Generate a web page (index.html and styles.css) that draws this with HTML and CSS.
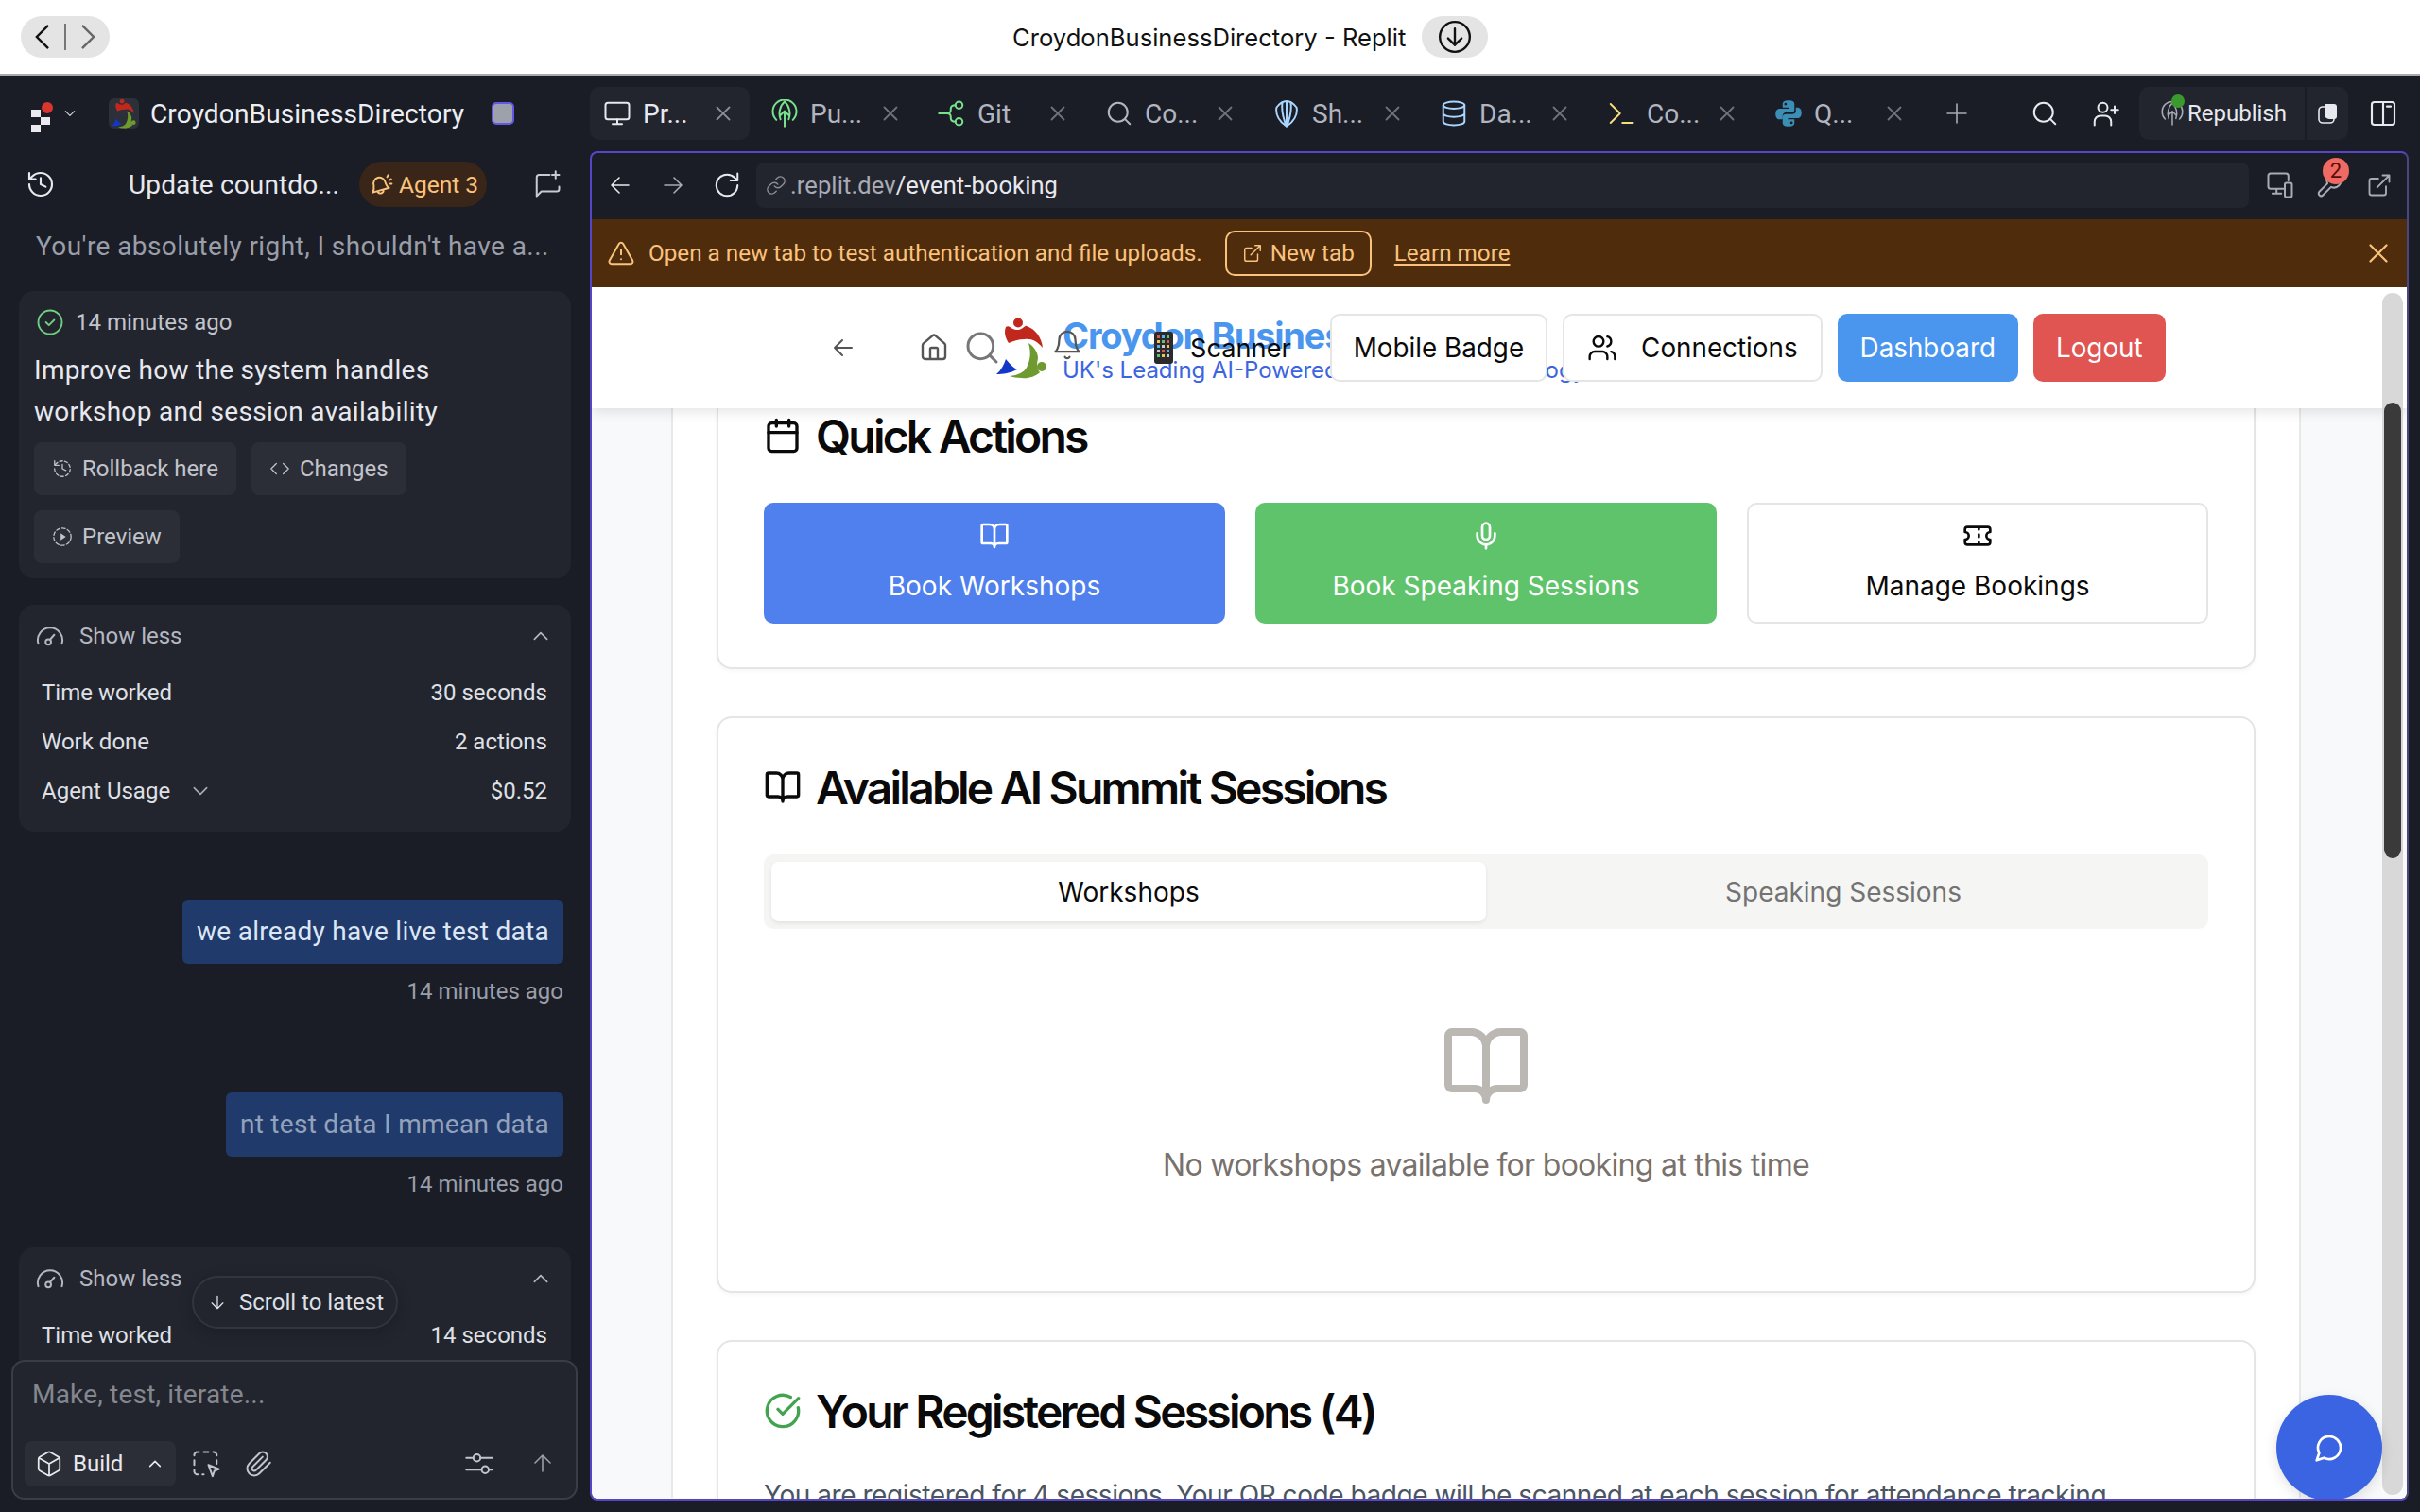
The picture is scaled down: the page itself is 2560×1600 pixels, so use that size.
FILE: index.html
```html
<!DOCTYPE html>
<html lang="en">
<head>
    <meta charset="utf-8" />
    <title>CroydonBusinessDirectory - Replit</title>
    <link rel="stylesheet" href="styles.css">
</head>
<body>
    <svg class="sprite" xmlns="http://www.w3.org/2000/svg">
        <defs>
            <symbol id="i-monitor" viewBox="0 0 24 24"><rect x="2" y="3" width="20" height="14" rx="2"/><path d="M8 21h8M12 17v4"/></symbol>
            <symbol id="i-x" viewBox="0 0 24 24"><path d="M18 6 6 18M6 6l12 12"/></symbol>
            <symbol id="i-publish" viewBox="0 0 24 24"><path d="M5 17.500a10 10 0 1 1 14 0M8.500 17C6.500 12 8 5.500 12 2c4 3.500 5.500 10 3.500 15M12 23V10M8 14l4-4 4 4"/></symbol>
            <symbol id="i-git" viewBox="0 0 24 24"><circle cx="18" cy="5" r="3"/><circle cx="18" cy="19" r="3"/><path d="M1 12h7c2.500 0 3-1.500 3-3V8c0-1.500 1-3 4-3M8 12c2.500 0 3 1.500 3 3v1c0 1.500 1 3 4 3"/></symbol>
            <symbol id="i-search" viewBox="0 0 24 24"><circle cx="11" cy="11" r="8"/><path d="m21 21-4.300-4.300"/></symbol>
            <symbol id="i-shell" viewBox="0 0 24 24"><path d="M12 23C6 19 2.500 13 3.500 7 6 3.500 9 1.500 12 1.500S18 3.500 20.500 7C21.500 13 18 19 12 23ZM12 23C9 16 7.500 9 8.500 2.500M12 23c3-7 4.500-14 3.500-20.500M12 23V1.500"/></symbol>
            <symbol id="i-db" viewBox="0 0 24 24"><ellipse cx="12" cy="5" rx="9" ry="3"/><path d="M3 5v14a9 3 0 0 0 18 0V5M3 12a9 3 0 0 0 18 0"/></symbol>
            <symbol id="i-plus" viewBox="0 0 24 24"><path d="M12 2v20M2 12h20"/></symbol>
            <symbol id="i-user-plus" viewBox="0 0 24 24"><circle cx="10" cy="7" r="4"/><path d="M3 22v-3a5 5 0 0 1 5-5h4a5 5 0 0 1 5 5v3M20 6v6M17 9h6"/></symbol>
            <symbol id="i-panel" viewBox="0 0 24 24"><rect x="3" y="3" width="18" height="18" rx="2"/><path d="M12 3v18M15 6.500h3"/></symbol>
            <symbol id="i-history" viewBox="0 0 24 24"><path d="M3 12a9 9 0 1 0 9-9 9.750 9.750 0 0 0-6.740 2.740L3 8M3 3v5h5M12 7v5l4 2"/></symbol>
            <symbol id="i-bell-ring" viewBox="0 0 24 24"><path d="M9 5.500a6 6 0 0 1 7 4c1.500 5 4 6 4 6L4 20s1.500-2.500 1-7a6 6 0 0 1 4-7.500ZM9 19.500a3 3 0 0 0 5.500-1.500M19 3l-1 2M22 7l-2 1M22.500 11.500h-1.500"/></symbol>
            <symbol id="i-chat-plus" viewBox="0 0 24 24"><path d="M22 14v2a2 2 0 0 1-2 2H7l-4 4V6a2 2 0 0 1 2-2h9M19 1v6M16 4h6"/></symbol>
            <symbol id="i-check-circle" viewBox="0 0 24 24"><circle cx="12" cy="12" r="10"/><path d="m8.500 12 2.500 2.500 4.500-4.500"/></symbol>
            <symbol id="i-rollback" viewBox="0 0 24 24"><path stroke-dasharray="3.500 2.500" d="M3 12a9 9 0 1 0 9-9 9.750 9.750 0 0 0-6.740 2.740L3 8"/><path d="M3 3v5h5M12 7v5l4 2"/></symbol>
            <symbol id="i-code" viewBox="0 0 24 24"><path d="m8 6-6 6 6 6M16 6l6 6-6 6"/></symbol>
            <symbol id="i-preview" viewBox="0 0 24 24"><circle stroke-dasharray="4 2.600" cx="12" cy="12" r="10"/><path class="solid" d="m10 8 6 4-6 4Z"/></symbol>
            <symbol id="i-gauge" viewBox="0 0 24 24"><path d="M2 18.500A10.500 10.500 0 0 1 12 5a10.500 10.500 0 0 1 10 13.500"/><circle cx="10.500" cy="17" r="2.300"/><path d="m12 15 3.500-4"/></symbol>
            <symbol id="i-up" viewBox="0 0 24 24"><path d="m4 16 8-8 8 8"/></symbol>
            <symbol id="i-down" viewBox="0 0 24 24"><path d="m4 8 8 8 8-8"/></symbol>
            <symbol id="i-arrow-down" viewBox="0 0 24 24"><path d="M12 4v16M5 13l7 7 7-7"/></symbol>
            <symbol id="i-arrow-up" viewBox="0 0 24 24"><path d="M12 20V3M4 11l8-8 8 8"/></symbol>
            <symbol id="i-arrow-left" viewBox="0 0 24 24"><path d="M21 12H3M11 4l-8 8 8 8"/></symbol>
            <symbol id="i-arrow-right" viewBox="0 0 24 24"><path d="M3 12h18M13 4l8 8-8 8"/></symbol>
            <symbol id="i-box" viewBox="0 0 24 24"><path d="M21 8a2 2 0 0 0-1-1.730l-7-4a2 2 0 0 0-2 0l-7 4A2 2 0 0 0 3 8v8a2 2 0 0 0 1 1.730l7 4a2 2 0 0 0 2 0l7-4A2 2 0 0 0 21 16ZM3.300 7l8.700 5 8.700-5M12 22V12"/></symbol>
            <symbol id="i-select" viewBox="0 0 24 24"><path d="M5 2h1M10 2h4M18 2h1a3 3 0 0 1 2 2v1M21 9v3M2 5V4a3 3 0 0 1 2-2M2 9v4M2 17v2a3 3 0 0 0 2 2h1M9 21h1"/><path d="m14 13 9 3.500-4 1.500-1.500 4.500Z"/></symbol>
            <symbol id="i-clip" viewBox="0 0 24 24"><path d="m21.440 11.050-9.190 9.190a6 6 0 0 1-8.490-8.490l8.570-8.570A4 4 0 1 1 18 8.840l-8.590 8.570a2 2 0 0 1-2.830-2.830l8.490-8.480"/></symbol>
            <symbol id="i-sliders" viewBox="0 0 24 24"><path d="M1 7h6M13 7h10M1 17h13M20 17h3"/><circle cx="10" cy="7" r="3"/><circle cx="17" cy="17" r="3"/></symbol>
            <symbol id="i-reload" viewBox="0 0 24 24"><path d="M21 12a9 9 0 1 1-9-9c2.520 0 4.930 1 6.740 2.740L21 8M21 2v6h-6"/></symbol>
            <symbol id="i-link" viewBox="0 0 24 24"><path d="M10 13a5 5 0 0 0 7.540.54l3-3a5 5 0 0 0-7.070-7.070l-1.720 1.710M14 11a5 5 0 0 0-7.540-.54l-3 3a5 5 0 0 0 7.070 7.070l1.710-1.710"/></symbol>
            <symbol id="i-devices" viewBox="0 0 24 24"><path d="M15 15H4a2 2 0 0 1-2-2V4a2 2 0 0 1 2-2h13a2 2 0 0 1 2 2v4M9 15v4M5.500 19H13"/><rect x="16" y="10" width="6" height="12" rx="1.500"/></symbol>
            <symbol id="i-wrench" viewBox="0 0 24 24"><path d="M14.700 6.300a1 1 0 0 0 0 1.400l1.600 1.600a1 1 0 0 0 1.400 0l3.770-3.770a6 6 0 0 1-7.940 7.940l-6.910 6.910a2.120 2.120 0 0 1-3-3l6.910-6.910a6 6 0 0 1 7.940-7.940l-3.760 3.760z"/></symbol>
            <symbol id="i-external" viewBox="0 0 24 24"><path d="M18 13v6a2 2 0 0 1-2 2H5a2 2 0 0 1-2-2V8a2 2 0 0 1 2-2h6M15 3h6v6M10 14 21 3"/></symbol>
            <symbol id="i-alert" viewBox="0 0 24 24"><path d="m21.730 18-8-14a2 2 0 0 0-3.480 0l-8 14A2 2 0 0 0 4 21h16a2 2 0 0 0 1.730-3ZM12 9v4M12 17h.01"/></symbol>
            <symbol id="i-home" viewBox="0 0 24 24"><path d="M15 21v-8a1 1 0 0 0-1-1h-4a1 1 0 0 0-1 1v8M3 10a2 2 0 0 1 .709-1.528l7-5.999a2 2 0 0 1 2.582 0l7 5.999A2 2 0 0 1 21 10v9a2 2 0 0 1-2 2H5a2 2 0 0 1-2-2z"/></symbol>
            <symbol id="i-bell" viewBox="0 0 24 24"><path d="M6 8a6 6 0 0 1 12 0c0 7 3 9 3 9H3s3-2 3-9M10.300 21a1.940 1.940 0 0 0 3.400 0"/></symbol>
            <symbol id="i-users" viewBox="0 0 24 24"><path d="M16 21v-2a4 4 0 0 0-4-4H6a4 4 0 0 0-4 4v2M22 21v-2a4 4 0 0 0-3-3.870M16 3.130a4 4 0 0 1 0 7.750"/><circle cx="9" cy="7" r="4"/></symbol>
            <symbol id="i-calendar" viewBox="0 0 24 24"><path d="M8 2v4M16 2v4M3 10h18"/><rect x="3" y="4" width="18" height="18" rx="2"/></symbol>
            <symbol id="i-book" viewBox="0 0 24 24"><path d="M12 7v14M3 18a1 1 0 0 1-1-1V4a1 1 0 0 1 1-1h5a4 4 0 0 1 4 4 4 4 0 0 1 4-4h5a1 1 0 0 1 1 1v13a1 1 0 0 1-1 1h-6a3 3 0 0 0-3 3 3 3 0 0 0-3-3z"/></symbol>
            <symbol id="i-mic" viewBox="0 0 24 24"><path d="M12 2a3 3 0 0 0-3 3v7a3 3 0 0 0 6 0V5a3 3 0 0 0-3-3ZM19 10v2a7 7 0 0 1-14 0v-2M12 19v3"/></symbol>
            <symbol id="i-ticket" viewBox="0 0 24 24"><path d="M2 9a3 3 0 0 1 0 6v2a2 2 0 0 0 2 2h16a2 2 0 0 0 2-2v-2a3 3 0 0 1 0-6V7a2 2 0 0 0-2-2H4a2 2 0 0 0-2 2ZM13 5v2M13 17v2M13 11v2"/></symbol>
            <symbol id="i-check-big" viewBox="0 0 24 24"><path d="M21.800 10A10 10 0 1 1 17 3.335M9 11l3 3L22 4"/></symbol>
            <symbol id="i-message" viewBox="0 0 24 24"><path d="M7.900 20A9 9 0 1 0 4 16.100L2 22Z"/></symbol>
            <symbol id="logo-croydon" viewBox="0 0 60 66">
                <circle cx="26" cy="6.500" r="5" fill="#c0281e"/>
                <path fill="#c0281e" d="M13 11C17 8 18 14 26 14 31 14 33 9 35 10 44 13 51 22 52 33 46 26 40 23 33 24 26 24 21 26 16 28 12 22 11 16 13 11Z"/>
                <circle cx="51" cy="53" r="5" fill="#6f9a2f"/>
                <path fill="#6f9a2f" d="M37 28C43 32 47 38 47 44 46 49 45 54 49 59 44 64 35 66 30 65 25 65 20 64 17 63 26 62 32 59 35 54 39 46 40 38 37 28Z"/>
                <path fill="#1338c8" d="M13 45C17 50 21 54 25 56 18 60 10 61 3 61 8 57 11 51 13 45Z"/>
            </symbol>
        </defs>
    </svg>

    <header class="titlebar">
        <div class="history-pill">
            <svg class="pill-chev" viewBox="0 0 18 30"><path d="M16 2 3 15l13 13"/></svg>
            <span class="pill-sep"></span>
            <svg class="pill-chev pill-chev-off" viewBox="0 0 18 30"><path d="m2 2 13 13L2 28"/></svg>
        </div>
        <div class="title-group">
            <span class="title-text">CroydonBusinessDirectory - Replit</span>
            <span class="download-pill">
                <svg class="ic" viewBox="0 0 24 24"><circle cx="12" cy="12" r="10"/><path d="M12 6.500v11M7.500 13l4.500 4.500 4.500-4.500"/></svg>
            </span>
        </div>
    </header>

    <div class="workspace">
        <div class="topbar">
            <div class="project">
                <span class="replit-logo">
                    <i class="sq sq-a"></i><i class="sq sq-b"></i><i class="sq sq-c"></i><i class="red-dot"></i>
                </span>
                <svg class="ic project-chev"><use href="#i-down"/></svg>
                <span class="app-icon"><svg><use href="#logo-croydon"/></svg></span>
                <span class="project-name">CroydonBusinessDirectory</span>
                <span class="stop-btn"></span>
            </div>
            <div class="tabs">
                <div class="tab active"><svg class="ic"><use href="#i-monitor"/></svg><span>Pr...</span><svg class="ic tab-x"><use href="#i-x"/></svg></div>
                <div class="tab"><svg class="ic green"><use href="#i-publish"/></svg><span>Pu...</span><svg class="ic tab-x"><use href="#i-x"/></svg></div>
                <div class="tab"><svg class="ic green"><use href="#i-git"/></svg><span>Git</span><svg class="ic tab-x"><use href="#i-x"/></svg></div>
                <div class="tab"><svg class="ic"><use href="#i-search"/></svg><span>Co...</span><svg class="ic tab-x"><use href="#i-x"/></svg></div>
                <div class="tab"><svg class="ic skyblue"><use href="#i-shell"/></svg><span>Sh...</span><svg class="ic tab-x"><use href="#i-x"/></svg></div>
                <div class="tab"><svg class="ic skyblue"><use href="#i-db"/></svg><span>Da...</span><svg class="ic tab-x"><use href="#i-x"/></svg></div>
                <div class="tab">
                    <svg class="ic" viewBox="0 0 24 24"><path class="yellow" d="m3 4 8 8-8 8"/><path class="yellow" d="M13 20h9"/></svg>
                    <span>Co...</span><svg class="ic tab-x"><use href="#i-x"/></svg>
                </div>
                <div class="tab">
                    <svg class="py" viewBox="0 0 24 24">
                        <path d="M12 1C8.500 1 7 2.200 7 4v3h5.500v1H4.500C2.300 8 1 9.800 1 12.500S2.300 17 4.500 17H7v-3c0-1.800 1.600-3 3.500-3h4c1.700 0 2.500-1 2.500-2.500V4c0-1.800-1.500-3-5-3Zm-2.500 2a1.100 1.100 0 1 1 0 2.200 1.100 1.100 0 0 1 0-2.200Z"/>
                        <path d="M12 23c3.500 0 5-1.200 5-3v-3h-5.500v-1h8c2.200 0 3.500-1.800 3.500-4.500S21.700 7 19.500 7H18.200v3c0 1.800-1.200 2.500-3.200 2.500h-5c-1.700 0-3 .8-3 2.500v5c0 1.800 1.500 3 5 3Zm2.500-2a1.100 1.100 0 1 1 0-2.200 1.100 1.100 0 0 1 0 2.200Z"/>
                    </svg>
                    <span>Q...</span><svg class="ic tab-x"><use href="#i-x"/></svg>
                </div>
            </div>
            <svg class="ic top-plus"><use href="#i-plus"/></svg>
            <svg class="ic top-search"><use href="#i-search"/></svg>
            <svg class="ic top-invite"><use href="#i-user-plus"/></svg>
            <div class="republish">
                <span class="republish-main">
                    <span class="republish-icon"><svg class="ic"><use href="#i-publish"/></svg><i class="live-dot"></i></span>
                    Republish
                </span>
                <span class="republish-side">
                    <svg viewBox="0 0 24 24"><rect class="outline" x="3" y="5" width="16" height="17" rx="4"/><path class="fill" d="M9 2h10a3 3 0 0 1 3 3v10a3 3 0 0 1-3 3h-5a5 5 0 0 1-5-5Z"/></svg>
                </span>
            </div>
            <svg class="ic top-panel"><use href="#i-panel"/></svg>
        </div>

        <div class="panes">
            <aside class="agent">
                <div class="agent-head">
                    <svg class="ic head-history"><use href="#i-history"/></svg>
                    <span class="agent-title">Update countdo...</span>
                    <span class="agent-pill"><svg class="ic"><use href="#i-bell-ring"/></svg>Agent 3</span>
                    <svg class="ic head-new"><use href="#i-chat-plus"/></svg>
                </div>
                <div class="agent-sub">You're absolutely right, I shouldn't have a...</div>

                <div class="feed">
                    <section class="card checkpoint">
                        <div class="when"><svg class="ic ok"><use href="#i-check-circle"/></svg>14 minutes ago</div>
                        <p class="summary">Improve how the system handles workshop and session availability</p>
                        <div class="actions">
                            <span class="action"><svg class="ic"><use href="#i-rollback"/></svg>Rollback here</span>
                            <span class="action"><svg class="ic"><use href="#i-code"/></svg>Changes</span>
                            <span class="action"><svg class="ic"><use href="#i-preview"/></svg>Preview</span>
                        </div>
                    </section>

                    <section class="card stats">
                        <div class="stats-head">
                            <svg class="ic gauge"><use href="#i-gauge"/></svg>Show less
                            <svg class="ic stats-chev"><use href="#i-up"/></svg>
                        </div>
                        <div class="stat"><span>Time worked</span><span>30 seconds</span></div>
                        <div class="stat"><span>Work done</span><span>2 actions</span></div>
                        <div class="stat"><span>Agent Usage<svg class="ic usage-chev"><use href="#i-down"/></svg></span><span>$0.52</span></div>
                    </section>

                    <div class="bubble">we already have live test data</div>
                    <div class="bubble-time">14 minutes ago</div>

                    <div class="bubble bubble-dim">nt test data I mmean data</div>
                    <div class="bubble-time">14 minutes ago</div>

                    <section class="card stats">
                        <div class="stats-head">
                            <svg class="ic gauge"><use href="#i-gauge"/></svg>Show less
                            <svg class="ic stats-chev"><use href="#i-up"/></svg>
                        </div>
                        <div class="stat"><span>Time worked</span><span>14 seconds</span></div>
                    </section>

                    <div class="scroll-latest"><svg class="ic"><use href="#i-arrow-down"/></svg>Scroll to latest</div>
                </div>

                <div class="composer">
                    <div class="composer-input">Make, test, iterate...</div>
                    <div class="composer-tools">
                        <span class="build-btn"><svg class="ic"><use href="#i-box"/></svg>Build<svg class="ic build-chev"><use href="#i-up"/></svg></span>
                        <svg class="ic tool-select"><use href="#i-select"/></svg>
                        <svg class="ic tool-clip"><use href="#i-clip"/></svg>
                        <svg class="ic tool-sliders"><use href="#i-sliders"/></svg>
                        <svg class="ic tool-send"><use href="#i-arrow-up"/></svg>
                    </div>
                </div>
            </aside>

            <main class="preview">
                <div class="toolbar">
                    <svg class="ic tb-back"><use href="#i-arrow-left"/></svg>
                    <svg class="ic tb-forward"><use href="#i-arrow-right"/></svg>
                    <svg class="ic tb-reload"><use href="#i-reload"/></svg>
                    <div class="urlbar"><svg class="ic"><use href="#i-link"/></svg><span class="url-host">.replit.dev</span><span class="url-path">/event-booking</span></div>
                    <svg class="ic tb-devices"><use href="#i-devices"/></svg>
                    <span class="tb-tools"><svg class="ic"><use href="#i-wrench"/></svg><b class="badge">2</b></span>
                    <svg class="ic tb-open"><use href="#i-external"/></svg>
                </div>

                <div class="notice">
                    <svg class="ic notice-alert"><use href="#i-alert"/></svg>
                    <span>Open a new tab to test authentication and file uploads.</span>
                    <span class="notice-btn"><svg class="ic"><use href="#i-external"/></svg>New tab</span>
                    <span class="notice-link">Learn more</span>
                    <svg class="ic notice-x"><use href="#i-x"/></svg>
                </div>

                <div class="page">
                    <nav class="site-nav">
                        <div class="brand-text">
                            <div class="brand-name">Croydon Business Directory</div>
                            <div class="brand-sub">UK's Leading AI-Powered Business&nbsp;&nbsp; Technology</div>
                        </div>
                        <svg class="ic nav-back"><use href="#i-arrow-left"/></svg>
                        <svg class="ic nav-home"><use href="#i-home"/></svg>
                        <svg class="ic nav-search"><use href="#i-search"/></svg>
                        <svg class="nav-logo"><use href="#logo-croydon"/></svg>
                        <svg class="ic nav-bell"><use href="#i-bell"/></svg>
                        <span class="nav-scanner">
                            <svg class="phone" viewBox="0 0 20 34">
                                <rect width="20" height="34" rx="3" fill="#2b2b2e"/>
                                <g fill="#e0564a"><rect x="3" y="4" width="3" height="3"/><rect x="13" y="9" width="3" height="3"/><rect x="8" y="19" width="3" height="3"/></g>
                                <g fill="#57b4e8"><rect x="8" y="4" width="3" height="3"/><rect x="3" y="14" width="3" height="3"/><rect x="13" y="19" width="3" height="3"/></g>
                                <g fill="#62c46a"><rect x="13" y="4" width="3" height="3"/><rect x="8" y="9" width="3" height="3"/><rect x="3" y="24" width="3" height="3"/></g>
                                <g fill="#f1c24d"><rect x="3" y="9" width="3" height="3"/><rect x="13" y="14" width="3" height="3"/><rect x="8" y="24" width="3" height="3"/></g>
                                <g fill="#c9c9d2"><rect x="8" y="14" width="3" height="3"/><rect x="3" y="19" width="3" height="3"/><rect x="13" y="24" width="3" height="3"/></g>
                            </svg>
                            Scanner
                        </span>
                        <span class="nav-btn nav-badge">Mobile Badge</span>
                        <span class="nav-btn"><svg class="ic"><use href="#i-users"/></svg>Connections</span>
                        <span class="nav-btn nav-dash">Dashboard</span>
                        <span class="nav-btn nav-logout">Logout</span>
                    </nav>

                    <div class="scroller">
                        <div class="column">
                            <section class="panel panel-cut">
                                <h2><svg class="ic"><use href="#i-calendar"/></svg>Quick Actions</h2>
                                <div class="quick-grid">
                                    <a class="quick quick-blue"><svg class="ic"><use href="#i-book"/></svg>Book Workshops</a>
                                    <a class="quick quick-green"><svg class="ic"><use href="#i-mic"/></svg>Book Speaking Sessions</a>
                                    <a class="quick quick-plain"><svg class="ic"><use href="#i-ticket"/></svg>Manage Bookings</a>
                                </div>
                            </section>

                            <section class="panel">
                                <h2><svg class="ic"><use href="#i-book"/></svg>Available AI Summit Sessions</h2>
                                <div class="segment">
                                    <span class="segment-item on">Workshops</span>
                                    <span class="segment-item">Speaking Sessions</span>
                                </div>
                                <div class="empty">
                                    <svg class="ic"><use href="#i-book"/></svg>
                                    <p>No workshops available for booking at this time</p>
                                </div>
                            </section>

                            <section class="panel">
                                <h2><svg class="ic ok-green"><use href="#i-check-big"/></svg>Your Registered Sessions (4)</h2>
                                <p class="panel-note">You are registered for 4 sessions. Your QR code badge will be scanned at each session for attendance tracking.</p>
                            </section>
                        </div>
                    </div>

                    <div class="scrollbar"><div class="scrollbar-thumb"></div></div>
                    <div class="chat-fab"><svg class="ic"><use href="#i-message"/></svg></div>
                </div>
            </main>
        </div>
    </div>
</body>
</html>
```

FILE: styles.css
```css
* {
    box-sizing: border-box;
}
html,
body {
    margin: 0;
    padding: 0;
}
body {
    width: 2560px;
    height: 1600px;
    overflow: hidden;
    background: #1a1d26;
    color: #e8e9ee;
    font-family: Roboto, "Noto Sans", sans-serif;
    font-size: 24px;
}
.sprite {
    display: none;
}
.ic {
    display: block;
    flex: none;
    width: 32px;
    height: 32px;
    fill: none;
    stroke: currentColor;
    stroke-width: 1.6;
    stroke-linecap: round;
    stroke-linejoin: round;
}
.solid {
    fill: currentColor;
    stroke: none;
}

/* mac title bar */
.titlebar {
    display: flex;
    align-items: center;
    height: 80px;
    padding: 0 22px;
    background: #fff;
    border-bottom: 2px solid #a9a9a9;
    color: #111;
}
.history-pill {
    display: flex;
    align-items: center;
    justify-content: center;
    gap: 15px;
    width: 94px;
    height: 44px;
    border-radius: 22px;
    background: #e4e4e4;
}
.pill-chev {
    width: 17px;
    height: 28px;
    fill: none;
    stroke: #111;
    stroke-width: 2.6;
}
.pill-chev-off {
    stroke: #666;
}
.pill-sep {
    width: 2px;
    height: 28px;
    background: #777;
}
.title-group {
    display: flex;
    align-items: center;
    gap: 17px;
    margin-left: 955px;
}
.title-text {
    font-family: Inter, sans-serif;
    font-size: 25.6px;
    color: #111;
}
.download-pill {
    display: flex;
    align-items: center;
    justify-content: center;
    width: 70px;
    height: 44px;
    border-radius: 22px;
    background: #e4e4e4;
}
.download-pill .ic {
    width: 38px;
    height: 38px;
    stroke-width: 1.5;
}

/* replit top bar */
.workspace {
    height: 1520px;
}
.topbar {
    display: flex;
    align-items: center;
    height: 80px;
}
.project {
    display: flex;
    align-items: center;
    width: 624px;
    padding-left: 33px;
}
.replit-logo {
    position: relative;
    width: 23px;
    height: 32px;
    margin-top: 8px;
}
.sq {
    position: absolute;
    background: #e9e9ef;
}
.sq-a {
    left: 0;
    top: 8px;
    width: 10px;
    height: 8px;
}
.sq-b {
    left: 10px;
    top: 16px;
    width: 10px;
    height: 8px;
}
.sq-c {
    left: 0;
    top: 24px;
    width: 10px;
    height: 8px;
}
.red-dot {
    position: absolute;
    left: 11px;
    top: 0;
    width: 12px;
    height: 12px;
    border-radius: 50%;
    background: #d8362e;
}
.project-chev {
    width: 14px;
    height: 14px;
    margin-left: 11px;
    stroke-width: 2.2;
    color: #c8cad2;
}
.app-icon {
    display: flex;
    align-items: center;
    justify-content: center;
    width: 32px;
    height: 32px;
    margin-left: 34px;
    border-radius: 6px;
    background: #2c3038;
}
.app-icon svg {
    width: 30px;
    height: 32px;
}
.project-name {
    margin-left: 12px;
    font-size: 28px;
    letter-spacing: 0.15px;
    color: #eceef3;
}
.stop-btn {
    width: 24px;
    height: 24px;
    margin-left: 29px;
    border: 2px solid #6257e8;
    border-radius: 5px;
    background: #9da1ab;
}
.tabs {
    display: flex;
    gap: 8px;
}
.tab {
    display: flex;
    align-items: center;
    width: 169px;
    height: 56px;
    padding: 0 15px 0 14px;
    border-radius: 10px;
    color: #b2b5bf;
    font-size: 28px;
}
.tab span {
    flex: 1;
    margin-left: 12px;
}
.tab.active {
    background: #22252e;
    color: #e8e9ee;
}
.tab .ic {
    width: 30px;
    height: 30px;
}
.tab .tab-x {
    width: 26px;
    height: 26px;
    color: #6f727c;
    stroke-width: 1.7;
}
.tab.active .tab-x {
    color: #8a8d97;
}
.green {
    color: #79e08c;
}
.skyblue {
    color: #a9d5ff;
}
.yellow {
    stroke: #f5dc7d;
}
.py {
    flex: none;
    width: 30px;
    height: 30px;
    fill: #3b8fb4;
}
.top-plus {
    width: 24px;
    height: 24px;
    margin-left: 26px;
    color: #a8abb5;
}
.top-search {
    width: 30px;
    height: 30px;
    margin-left: 66px;
    color: #e8e9ee;
}
.top-invite {
    width: 30px;
    height: 30px;
    margin-left: 34px;
    color: #e8e9ee;
}
.republish {
    display: flex;
    align-items: stretch;
    width: 221px;
    height: 56px;
    margin-left: 21px;
    border-radius: 10px;
    background: #22252e;
}
.republish-main {
    display: flex;
    align-items: center;
    gap: 3px;
    width: 177px;
    padding-left: 22px;
    border-right: 2px solid #1a1d26;
    font-size: 24px;
    color: #e8e9ee;
}
.republish-icon {
    position: relative;
}
.republish-icon .ic {
    width: 26px;
    height: 28px;
    color: #a8abb5;
    stroke-width: 1.4;
}
.live-dot {
    position: absolute;
    right: 0;
    top: -6px;
    width: 14px;
    height: 14px;
    border-radius: 50%;
    background: #3a9a2e;
}
.republish-side {
    display: flex;
    align-items: center;
    justify-content: center;
    flex: 1;
}
.republish-side svg {
    width: 24px;
    height: 24px;
}
.republish-side .outline {
    fill: none;
    stroke: #e8e9ee;
    stroke-width: 1.6;
}
.republish-side .fill {
    fill: #e8e9ee;
}
.top-panel {
    width: 32px;
    height: 34px;
    margin-left: 21px;
    color: #e8e9ee;
}

.panes {
    display: flex;
    height: 1440px;
}

/* agent column */
.agent {
    display: flex;
    flex-direction: column;
    width: 624px;
    height: 1440px;
}
.agent-head {
    display: flex;
    align-items: center;
    height: 70px;
    padding-left: 27px;
}
.head-history {
    width: 32px;
    height: 32px;
}
.agent-title {
    width: 244px;
    margin-left: 77px;
    font-size: 28px;
    letter-spacing: 0.15px;
}
.agent-pill {
    display: flex;
    align-items: center;
    gap: 6px;
    width: 135px;
    height: 48px;
    padding-left: 10px;
    border-radius: 24px;
    background: #3a2618;
    color: #fbc47e;
    font-size: 24.5px;
}
.agent-pill .ic {
    width: 26px;
    height: 26px;
    stroke-width: 1.8;
}
.head-new {
    margin-left: 49px;
    color: #c9cbd3;
    width: 30px;
    height: 30px;
}
.agent-sub {
    height: 60px;
    margin-bottom: 18px;
    padding-left: 38px;
    font-size: 28px;
    letter-spacing: 0.42px;
    line-height: 61px;
    color: #9a9ea9;
}
.feed {
    position: relative;
    flex: 1;
    overflow: hidden;
    padding: 0 20px;
}
.card {
    width: 584px;
    border-radius: 16px;
    background: #22252e;
}
.checkpoint {
    padding: 16px;
}
.when {
    display: flex;
    align-items: center;
    gap: 12px;
    height: 34px;
    padding-left: 2px;
    color: #c2c4cc;
}
.ok {
    width: 30px;
    height: 30px;
    color: #6fd07f;
    stroke-width: 1.5;
}
.summary {
    max-width: 500px;
    margin: 12px 0 10px;
    font-size: 28px;
    letter-spacing: 0.3px;
    line-height: 44px;
}
.actions {
    display: flex;
    flex-wrap: wrap;
    gap: 16px;
}
.action {
    display: flex;
    align-items: center;
    gap: 10px;
    height: 56px;
    padding: 0 19px;
    border-radius: 8px;
    background: #2b2e37;
    color: #c2c4cc;
}
.action .ic {
    width: 22px;
    height: 22px;
    stroke-width: 1.4;
}
.stats {
    margin-top: 28px;
    padding: 16px 25px 17px;
}
.stats-head {
    display: flex;
    align-items: center;
    height: 34px;
    margin: 0 0 17px -7px;
    color: #b4b7c0;
}
.gauge {
    width: 30px;
    height: 30px;
    margin-right: 16px;
}
.stats-chev {
    width: 20px;
    height: 20px;
    margin-left: auto;
    margin-right: -3px;
    stroke-width: 2;
}
.stat {
    display: flex;
    align-items: center;
    justify-content: space-between;
    height: 52px;
    margin-left: -1px;
    color: #dfe0e6;
}
.stat span {
    display: flex;
    align-items: center;
}
.usage-chev {
    width: 20px;
    height: 20px;
    margin-left: 22px;
    stroke-width: 2;
    color: #a8abb5;
}
.bubble {
    width: fit-content;
    height: 68px;
    margin: 72px 8px 0 auto;
    padding: 0 15px;
    border-radius: 6px;
    background: #1f3a6b;
    font-size: 28px;
    letter-spacing: 0.28px;
    line-height: 68px;
    color: #dde6f5;
}
.bubble-dim {
    margin-top: 90px;
    color: #93a1ba;
}
.bubble-time {
    height: 34px;
    margin: 12px 8px 0 0;
    line-height: 34px;
    text-align: right;
    color: #9a9ea9;
}
.bubble-time + .card {
    margin-top: 50px;
}
.scroll-latest {
    position: absolute;
    left: 203px;
    top: 1042px;
    display: flex;
    align-items: center;
    gap: 13px;
    height: 56px;
    padding: 0 13px 0 15px;
    border: 2px solid #32353e;
    border-radius: 28px;
    background: #22252e;
    box-shadow: 0 4px 16px rgba(0, 0, 0, 0.2);
    color: #dfe0e6;
}
.scroll-latest .ic {
    width: 20px;
    height: 20px;
}
.composer {
    display: flex;
    flex-direction: column;
    justify-content: space-between;
    flex: none;
    height: 148px;
    margin: 0 13px 13px 12px;
    padding: 12px;
    border: 2px solid #3a3d46;
    border-radius: 14px;
    background: #22252e;
}
.composer-input {
    padding: 6px 0 0 8px;
    font-size: 28px;
    letter-spacing: 0.2px;
    color: #84878f;
}
.composer-tools {
    display: flex;
    align-items: center;
}
.build-btn {
    display: flex;
    align-items: center;
    width: 160px;
    height: 48px;
    padding-left: 11px;
    border-radius: 8px;
    background: #2b2e37;
    font-size: 24px;
    color: #e8e9ee;
}
.build-btn .ic {
    width: 30px;
    height: 30px;
    margin-right: 10px;
    stroke-width: 1.4;
}
.build-btn .build-chev {
    width: 16px;
    height: 16px;
    margin: 0 0 0 26px;
    stroke-width: 2.4;
}
.tool-select {
    width: 30px;
    height: 30px;
    margin-left: 17px;
    color: #c2c4cc;
}
.tool-clip {
    width: 30px;
    height: 30px;
    margin-left: 26px;
    color: #c2c4cc;
}
.tool-sliders {
    width: 30px;
    height: 30px;
    margin-left: auto;
    color: #c2c4cc;
}
.tool-send {
    width: 24px;
    height: 28px;
    margin: 0 11px 0 40px;
    color: #9a9ea9;
}

/* preview pane */
.preview {
    display: flex;
    flex-direction: column;
    width: 1924px;
    height: 1428px;
    overflow: hidden;
    border: 2px solid #5546c8;
    border-right-color: #4a4780;
    border-radius: 8px;
}
.toolbar {
    display: flex;
    align-items: center;
    flex: none;
    height: 70px;
    padding: 0 0 2px 18px;
}
.tb-back,
.tb-forward {
    width: 24px;
    height: 24px;
    color: #e8e9ee;
}
.tb-forward {
    margin-left: 32px;
    color: #a8abb5;
}
.tb-reload {
    width: 30px;
    height: 30px;
    margin-left: 30px;
    color: #e8e9ee;
}
.urlbar {
    display: flex;
    align-items: center;
    width: 1579px;
    height: 48px;
    margin-left: 16px;
    padding-left: 10px;
    border-radius: 8px;
    background: #22252e;
    font-size: 25.5px;
    letter-spacing: 0.1px;
}
.urlbar .ic {
    width: 22px;
    height: 22px;
    color: #8a8d97;
}
.url-host {
    margin-left: 4px;
    color: #a8abb5;
}
.url-path {
    color: #e8e9ee;
}
.tb-devices {
    width: 30px;
    height: 30px;
    margin-left: 18px;
    color: #a8abb5;
}
.tb-tools {
    position: relative;
    margin-left: 22px;
}
.tb-tools .ic {
    width: 30px;
    height: 30px;
    color: #a8abb5;
}
.badge {
    position: absolute;
    left: 8px;
    top: -14px;
    width: 28px;
    height: 28px;
    border-radius: 50%;
    background: #ef6a62;
    color: #5c0c08;
    font-size: 22px;
    font-weight: 400;
    line-height: 28px;
    text-align: center;
}
.tb-open {
    width: 28px;
    height: 28px;
    margin-left: 24px;
    color: #a8abb5;
}
.notice {
    display: flex;
    align-items: center;
    flex: none;
    height: 72px;
    padding-left: 16px;
    background: #4f2c0c;
    color: #f9c27d;
    font-size: 24.25px;
}
.notice-alert {
    width: 30px;
    height: 30px;
    margin-right: 14px;
}
.notice-btn {
    display: flex;
    align-items: center;
    gap: 8px;
    height: 48px;
    margin-left: 24px;
    padding: 0 16px;
    border: 2px solid #f9c27d;
    border-radius: 10px;
}
.notice-btn .ic {
    width: 22px;
    height: 22px;
}
.notice-link {
    margin-left: 24px;
    text-decoration: underline;
    text-underline-offset: 3px;
}
.notice-x {
    width: 34px;
    height: 34px;
    margin-left: auto;
    margin-right: 13px;
    stroke-width: 1.6;
}

/* the app inside the preview */
.page {
    position: relative;
    flex: 1;
    overflow: hidden;
    background: #f8f9fb;
    font-family: Inter, sans-serif;
    color: #0a0a0a;
}
.site-nav {
    position: relative;
    z-index: 2;
    display: flex;
    align-items: center;
    height: 128px;
    padding-left: 254px;
    background: #fff;
    box-shadow: 0 4px 12px rgba(0, 0, 0, 0.1);
}
.brand-text {
    position: absolute;
    left: 498px;
    top: 30px;
    white-space: nowrap;
}
.brand-name {
    font-size: 38px;
    font-weight: 700;
    letter-spacing: -1.2px;
    line-height: 42px;
    color: #4a96ee;
}
.brand-sub {
    font-size: 24px;
    line-height: 32px;
    color: #3b64e0;
}
.nav-back,
.nav-home,
.nav-search,
.nav-logo,
.nav-bell,
.nav-scanner {
    position: relative;
    flex: none;
}
.nav-back {
    width: 24px;
    height: 24px;
    color: #555;
    stroke-width: 2;
}
.nav-home {
    width: 32px;
    height: 32px;
    margin-left: 68px;
    color: #555;
    stroke-width: 1.8;
}
.nav-search {
    width: 40px;
    height: 40px;
    margin-left: 15px;
    color: #777;
    stroke-width: 1.8;
}
.nav-logo {
    width: 60px;
    height: 66px;
    margin-left: -8px;
}
.nav-bell {
    width: 34px;
    height: 34px;
    margin: -6px 0 0 1px;
    color: #555;
    stroke-width: 1.6;
}
.nav-scanner {
    display: flex;
    align-items: center;
    gap: 18px;
    margin-left: 75px;
    font-size: 27.2px;
    color: #0a0a0a;
}
.phone {
    width: 20px;
    height: 34px;
}
.nav-btn {
    position: relative;
    display: flex;
    align-items: center;
    gap: 25px;
    height: 72px;
    margin-left: 16px;
    padding: 0 24px;
    border: 2px solid #e5e5e5;
    border-radius: 10px;
    background: #fff;
    font-size: 27.8px;
    color: #0a0a0a;
}
.nav-btn .ic {
    width: 32px;
    height: 32px;
    stroke-width: 1.8;
}
.nav-badge {
    margin-left: 41px;
    padding: 0 23px;
}
.nav-dash {
    border: 0;
    background: #4a96ee;
    color: #fff;
}
.nav-logout {
    border: 0;
    background: #e05552;
    color: #fff;
}
.scroller {
    height: 1153px;
    padding-left: 84px;
}
.column {
    width: 1724px;
    height: 100%;
    padding: 0 46px;
    border-left: 2px solid #e8e8e8;
    border-right: 2px solid #e8e8e8;
    background: #fff;
}
.panel {
    margin-bottom: 50px;
    padding: 48px 48px 46px;
    border: 2px solid #e5e5e5;
    border-radius: 16px;
    background: #fff;
    box-shadow: 0 2px 4px rgba(0, 0, 0, 0.04);
}
.panel-cut {
    padding-top: 4px;
    border-top: 0;
    border-radius: 0 0 16px 16px;
}
h2 {
    display: flex;
    align-items: center;
    gap: 15px;
    height: 50px;
    margin: 0 0 46px;
    font-size: 48px;
    font-weight: 600;
    letter-spacing: -2.8px;
    color: #0a0a0a;
}
h2 .ic {
    width: 40px;
    height: 40px;
    stroke-width: 2;
}
.ok-green {
    color: #43a34f;
}
.quick-grid {
    display: grid;
    grid-template-columns: repeat(3, 1fr);
    gap: 32px;
}
.quick {
    display: flex;
    flex-direction: column;
    align-items: center;
    gap: 20px;
    height: 128px;
    padding-top: 19px;
    border-radius: 10px;
    font-size: 28px;
}
.quick .ic {
    width: 32px;
    height: 32px;
    stroke-width: 2;
}
.quick-blue {
    background: #4f80ee;
    color: #fff;
}
.quick-green {
    background: #5fc36b;
    color: #fff;
}
.quick-plain {
    border: 2px solid #e5e5e5;
    padding-top: 17px;
    color: #0a0a0a;
}
.segment {
    display: grid;
    grid-template-columns: 1fr 1fr;
    height: 79px;
    padding: 8px;
    border-radius: 10px;
    background: #f5f5f4;
}
.segment-item {
    display: flex;
    align-items: center;
    justify-content: center;
    border-radius: 8px;
    font-size: 28px;
    color: #737373;
}
.segment-item.on {
    background: #fff;
    box-shadow: 0 2px 4px rgba(0, 0, 0, 0.08);
    color: #0a0a0a;
}
.empty {
    display: flex;
    flex-direction: column;
    align-items: center;
    height: 337px;
    padding-top: 97px;
}
.empty .ic {
    width: 96px;
    height: 96px;
    stroke-width: 2;
    color: #bbb8b4;
}
.empty p {
    margin: 33px 0 0;
    font-size: 32px;
    letter-spacing: -0.7px;
    line-height: 48px;
    color: #78716c;
}
.panel-note {
    margin: -2px 0 0;
    font-size: 28px;
    letter-spacing: -0.45px;
    line-height: 40px;
    color: #4b5563;
}
.scrollbar {
    position: absolute;
    right: 4px;
    top: 6px;
    width: 22px;
    height: 1272px;
    border-radius: 11px;
    background: #d8d8d8;
    z-index: 3;
}
.scrollbar-thumb {
    width: 18px;
    height: 482px;
    margin: 116px 2px 0;
    border-radius: 9px;
    background: #3a3a3a;
}
.chat-fab {
    position: absolute;
    left: 1782px;
    bottom: -2px;
    z-index: 3;
    display: flex;
    align-items: center;
    justify-content: center;
    width: 112px;
    height: 112px;
    border-radius: 50%;
    background: #3b64e3;
    box-shadow: 0 4px 14px rgba(0, 0, 0, 0.12);
    color: #fff;
}
.chat-fab .ic {
    width: 32px;
    height: 32px;
    stroke-width: 2;
}
```
